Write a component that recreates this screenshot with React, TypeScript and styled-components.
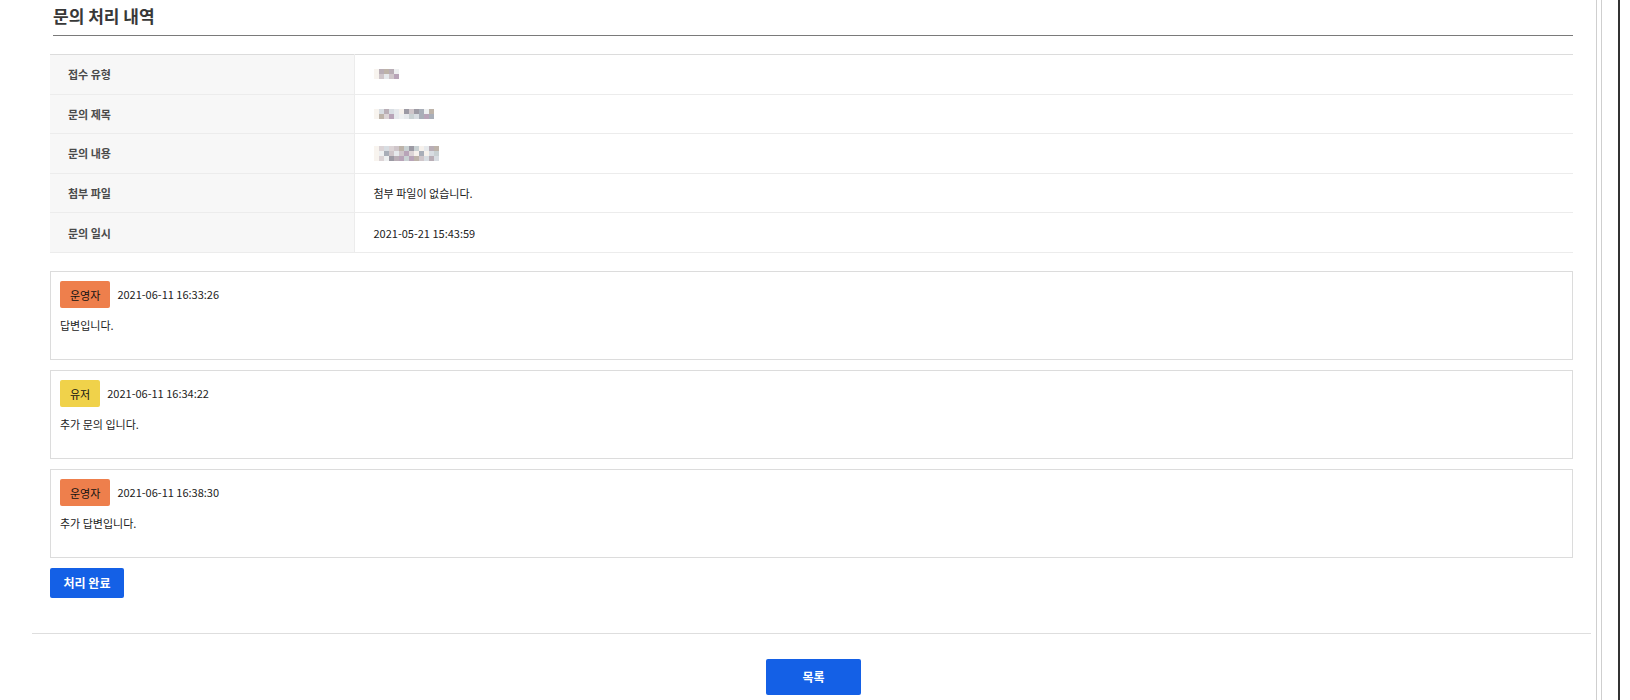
import styled, { createGlobalStyle } from 'styled-components';

const GlobalStyle = createGlobalStyle`
  html, body {
    margin: 0;
    padding: 0;
    background: #fff;
    font-family: 'Noto Sans CJK KR', 'Noto Sans', sans-serif;
    color: #222;
  }
  * { box-sizing: border-box; }
`;

interface InfoRow {
  label: string;
  value?: string;
  mosaic?: { cols: number; rows: number; seed: number };
}

interface Reply {
  role: 'admin' | 'user';
  date: string;
  text: string;
}

const infoRows: InfoRow[] = [
  { label: '접수 유형', mosaic: { cols: 5, rows: 2, seed: 3 } },
  { label: '문의 제목', mosaic: { cols: 12, rows: 2, seed: 7 } },
  { label: '문의 내용', mosaic: { cols: 13, rows: 3, seed: 11 } },
  { label: '첨부 파일', value: '첨부 파일이 없습니다.' },
  { label: '문의 일시', value: '2021-05-21 15:43:59' },
];

const replies: Reply[] = [
  { role: 'admin', date: '2021-06-11 16:33:26', text: '답변입니다.' },
  { role: 'user', date: '2021-06-11 16:34:22', text: '추가 문의 입니다.' },
  { role: 'admin', date: '2021-06-11 16:38:30', text: '추가 답변입니다.' },
];

const Page = styled.div`
  display: flex;
  width: 1630px;
  min-height: 700px;
`;

const Main = styled.main`
  width: 1596px;
  flex-shrink: 0;
`;

const Rail = styled.div`
  width: 6px;
  border-left: 1px solid #cfcfcf;
  border-right: 1px solid #cfcfcf;
  margin-right: 16px;
`;

const DarkBar = styled.div`
  width: 2px;
  background: #333;
`;

const Section = styled.section`
  padding: 0 23px 0 50px;
`;

const Title = styled.h2`
  margin: 0 0 0 3px;
  padding: 4px 0 7px;
  font-size: 17px;
  line-height: 24px;
  font-weight: 700;
  color: #383838;
  border-bottom: 1px solid #7a7a7a;
`;

const InfoTable = styled.table`
  width: 100%;
  margin-top: 18px;
  border-collapse: collapse;
  border-top: 1px solid #dcdcdc;
`;

const Row = styled.tr`
  border-bottom: 1px solid #ececec;
`;

const Label = styled.th`
  width: 304px;
  height: 39.6px;
  padding: 0 18px;
  background: #f7f7f7;
  border-right: 1px solid #ececec;
  text-align: left;
  font-size: 11px;
  font-weight: 700;
  color: #4a4a4a;
`;

const Value = styled.td`
  padding: 0 19px;
  font-size: 11px;
  color: #222;
`;

const MosaicGrid = styled.div<{ $cols: number }>`
  display: grid;
  grid-template-columns: repeat(${(p) => p.$cols}, 5px);
  grid-auto-rows: 5px;
`;

const Tile = styled.span<{ $c: string }>`
  background: ${(p) => p.$c};
`;

const palette = ['#f6f1ec', '#cfc6ca', '#b9aeb6', '#c9d1d3', '#dcd4d6', '#a9aeb8', '#e6e9ec', '#bdb3a9', '#9c9aa4', '#d8dde2', '#b8a4b8', '#eef0f1'];

function Mosaic({ cols, rows, seed }: { cols: number; rows: number; seed: number }) {
  const tiles = Array.from({ length: cols * rows }, (_, i) => {
    const col = i % cols;
    if (col === 0) return '#f8f4ef';
    return palette[(i * 7 + seed * 5 + ((i * i + seed) % 5)) % palette.length];
  });
  return (
    <MosaicGrid $cols={cols}>
      {tiles.map((c, i) => (
        <Tile key={i} $c={c} />
      ))}
    </MosaicGrid>
  );
}

const Replies = styled.div`
  display: flex;
  flex-direction: column;
  gap: 10px;
  margin-top: 18px;
`;

const ReplyBox = styled.div`
  height: 89px;
  padding: 9px;
  border: 1px solid #dcdcdc;
`;

const ReplyHead = styled.div`
  display: flex;
  align-items: center;
  gap: 7px;
`;

const Badge = styled.span<{ $role: 'admin' | 'user' }>`
  display: inline-flex;
  align-items: center;
  height: 27px;
  padding: 2px 10px 0;
  border-radius: 2px;
  background: ${(p) => (p.$role === 'admin' ? '#ee7f4c' : '#f0d24a')};
  color: #111;
  font-size: 11px;
`;

const DateText = styled.span`
  font-size: 11px;
  color: #222;
`;

const ReplyText = styled.p`
  margin: 9px 0 0;
  font-size: 11px;
  line-height: 16px;
  color: #222;
`;

const BlueButton = styled.button<{ $wide?: boolean }>`
  height: ${(p) => (p.$wide ? '36px' : '30px')};
  width: ${(p) => (p.$wide ? '95px' : '74px')};
  padding: 0;
  border: none;
  border-radius: 2px;
  background: #1460e6;
  color: #fff;
  font-family: 'Noto Sans CJK KR', 'Noto Sans', sans-serif;
  font-size: 12px;
  font-weight: 700;
  cursor: pointer;
`;

const DoneRow = styled.div`
  margin-top: 10px;
`;

const Footer = styled.footer`
  margin: 35px 5px 0 32px;
  padding: 25px 0 0 4px;
  border-top: 1px solid #dedede;
  display: flex;
  justify-content: center;
`;

const roleLabel = { admin: '운영자', user: '유저' };

export default function App() {
  return (
    <>
      <GlobalStyle />
      <Page>
        <Main>
          <Section>
            <Title>문의 처리 내역</Title>
            <InfoTable>
              <tbody>
                {infoRows.map((r) => (
                  <Row key={r.label}>
                    <Label>{r.label}</Label>
                    <Value>{r.mosaic ? <Mosaic {...r.mosaic} /> : r.value}</Value>
                  </Row>
                ))}
              </tbody>
            </InfoTable>
            <Replies>
              {replies.map((r) => (
                <ReplyBox key={r.date}>
                  <ReplyHead>
                    <Badge $role={r.role}>{roleLabel[r.role]}</Badge>
                    <DateText>{r.date}</DateText>
                  </ReplyHead>
                  <ReplyText>{r.text}</ReplyText>
                </ReplyBox>
              ))}
            </Replies>
            <DoneRow>
              <BlueButton>처리 완료</BlueButton>
            </DoneRow>
          </Section>
          <Footer>
            <BlueButton $wide>목록</BlueButton>
          </Footer>
        </Main>
        <Rail />
        <DarkBar />
      </Page>
    </>
  );
}
